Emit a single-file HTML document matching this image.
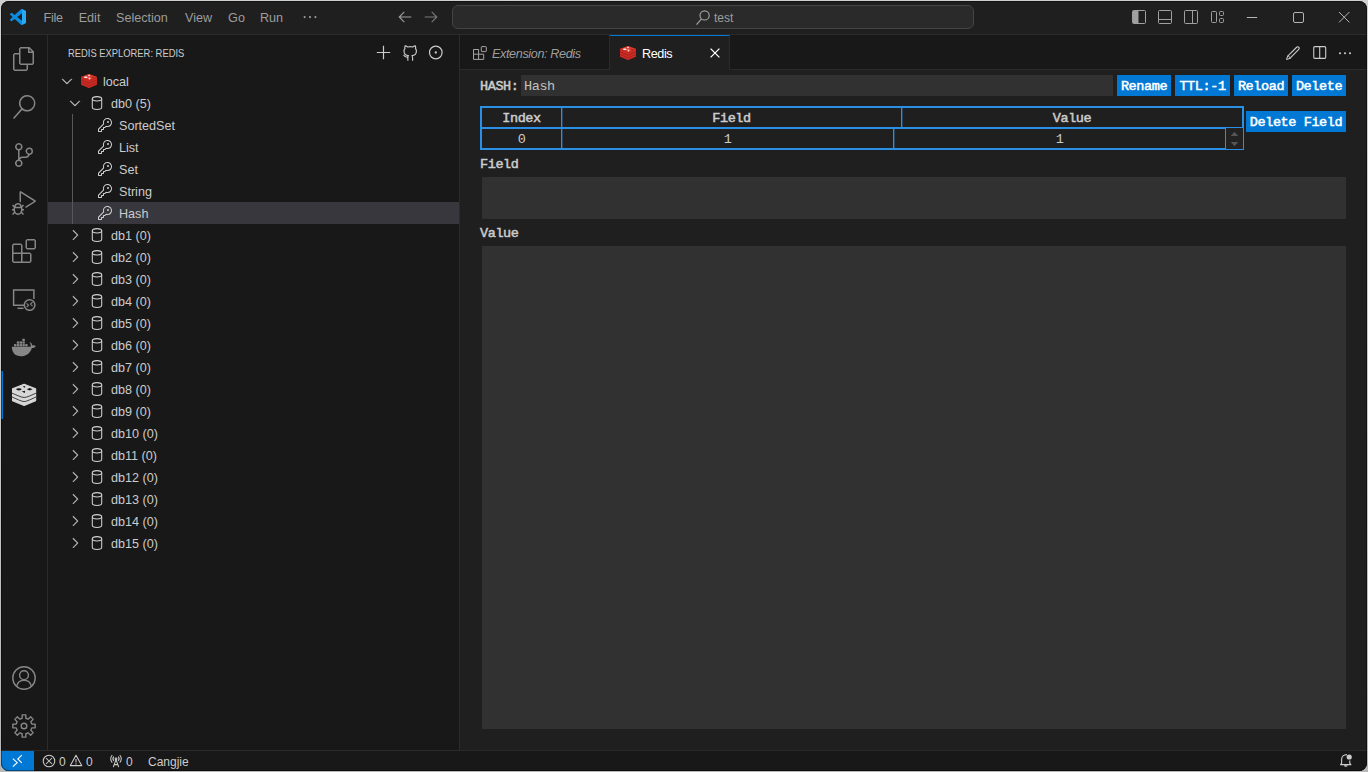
<!DOCTYPE html>
<html>
<head>
<meta charset="utf-8">
<title>Redis - test - Visual Studio Code</title>
<style>
*{box-sizing:border-box;margin:0;padding:0}
html,body{width:1368px;height:772px;overflow:hidden;background:linear-gradient(#d0d0d0,#c9c9c9 50%,#b8b8b8);font-family:"Liberation Sans",sans-serif;}
#win{position:absolute;left:1px;top:1px;width:1366px;height:770px;background:#1f1f1f;border-radius:8px;overflow:hidden;color:#cccccc;font-size:13px;}
.abs{position:absolute}
#win::after{content:"";position:absolute;left:0;top:0;right:0;bottom:0;border:1px solid rgba(0,0,0,.4);border-radius:8px;z-index:20}
/* title bar */
#title{position:absolute;left:0;top:0;width:1366px;height:34px;background:#1f1f1f;border-bottom:1px solid #2b2b2b;color:#9d9d9d}
#title .menu{position:absolute;top:1px;height:33px;line-height:33px;font-size:12.6px;white-space:nowrap}
#cc{position:absolute;left:451px;top:4px;width:522px;height:24px;border:1px solid #444444;border-radius:6px;background:#2a2a2a}
#cc span{position:absolute;left:261px;top:1px;line-height:22px;font-size:12px;color:#9d9d9d}
/* activity bar */
#act{position:absolute;left:0;top:34px;width:47px;height:715px;background:#181818;border-right:1px solid #2b2b2b}
#act svg{position:absolute}
/* sidebar */
#side{position:absolute;left:47px;top:34px;width:412px;height:715px;background:#181818;border-right:1px solid #2b2b2b}
#side .hdr{position:absolute;left:20px;top:0;height:35px;line-height:36px;font-size:11px;color:#cccccc;white-space:nowrap;transform:scaleX(0.853);transform-origin:0 0}
.row{position:absolute;left:0;width:411px;height:22px;line-height:22px;font-size:12.6px;color:#cccccc;white-space:nowrap}
.row span{position:absolute;top:1px}
.row svg{position:absolute}
.row.sel{background:#37373d}
/* editor */
#tabs{position:absolute;left:459px;top:34px;width:907px;height:35px;background:#181818;border-bottom:1px solid #2b2b2b}
.tab{position:absolute;top:0;height:35px;border-right:1px solid #2b2b2b;font-size:13px;line-height:35px;white-space:nowrap}
.tab.active{background:#1f1f1f;border-top:1px solid #0078d4;color:#fff;height:36px;line-height:33px}
#ed{position:absolute;left:459px;top:69px;width:907px;height:680px;background:#1f1f1f;font-family:"Liberation Mono",monospace;font-size:13.5px;letter-spacing:-0.4px;color:#cccccc}
.btn{position:absolute;padding-top:1px;background:#0078d4;color:#fff;font-family:"Liberation Mono",monospace;font-size:13.5px;font-weight:normal;-webkit-text-stroke:0.5px #fff;text-align:center;white-space:nowrap}
.lbl{position:absolute;font-weight:normal;-webkit-text-stroke:0.5px #cccccc;font-size:13.5px;color:#cccccc;white-space:nowrap}
.inp{position:absolute;background:#313131}
.cell{position:absolute;height:19px;line-height:21px;text-align:center;color:#cccccc}
/* status */
#status{position:absolute;left:0;top:749px;width:1366px;height:21px;background:#181818;border-top:1px solid #2b2b2b;font-size:12px;color:#cccccc}
#status span{position:absolute;top:1px;line-height:21px;white-space:nowrap}
#remote{position:absolute;left:0;top:0;width:33px;height:21px;background:#0078d4}
</style>
</head>
<body>
<div id="win">
  <div id="title">
    <svg class="abs" style="left:9px;top:8px" width="16" height="16" viewBox="0 0 100 100"><path fill="#0c8ce0" d="M96.46 10.8L75.86.88a6.23 6.23 0 0 0-7.11 1.2L29.35 38.04 12.2 25.02a4.16 4.16 0 0 0-5.32.23l-5.5 5a4.17 4.17 0 0 0 0 6.16L16.25 50 1.37 63.59a4.17 4.17 0 0 0 0 6.16l5.5 5a4.16 4.16 0 0 0 5.33.23l17.15-13.02 39.4 35.96a6.23 6.23 0 0 0 7.1 1.2l20.62-9.92A6.25 6.25 0 0 0 100 83.58V16.42a6.25 6.25 0 0 0-3.54-5.62zM75.02 72.7L45.1 50l29.9-22.7v45.4z"/><path fill="#27a9f5" d="M75.02 0.6 L96.46 10.8 A6.25 6.25 0 0 1 100 16.42 V83.58 A6.25 6.25 0 0 1 96.46 89.2 L75.02 99.4 Z"/></svg>
    <div class="menu" style="left:42.500px;letter-spacing:-0.3px">File</div>
    <div class="menu" style="left:77.700px">Edit</div>
    <div class="menu" style="left:115px">Selection</div>
    <div class="menu" style="left:184px">View</div>
    <div class="menu" style="left:227px;letter-spacing:0.3px">Go</div>
    <div class="menu" style="left:259px">Run</div>
    <svg class="abs" style="left:301px;top:8px" width="16" height="16" viewBox="0 0 16 16" fill="#9d9d9d"><circle cx="2.6" cy="8.1" r="1.05"/><circle cx="8" cy="8.1" r="1.05"/><circle cx="13.4" cy="8.1" r="1.05"/></svg>
    <svg class="abs" style="left:395.800px;top:8px" width="16" height="16" viewBox="0 0 16 16" fill="none" stroke="#9d9d9d" stroke-width="1.1"><path d="M14.3 8H2.2M7.3 2.8L2.2 8l5.1 5.2"/></svg>
    <svg class="abs" style="left:422px;top:8px" width="16" height="16" viewBox="0 0 16 16" fill="none" stroke="#7a7a7a" stroke-width="1.1"><path d="M1.7 8h12.1M8.7 2.8L13.8 8l-5.1 5.2"/></svg>
    <!-- layout icons -->
    <svg class="abs" style="left:1130px;top:8px" width="16" height="16" viewBox="0 0 16 16"><rect x="1.5" y="1.5" width="13" height="13" rx="1" fill="none" stroke="#a0a0a0" stroke-width="1"/><rect x="2" y="2" width="5.5" height="12" fill="#a0a0a0"/></svg>
    <svg class="abs" style="left:1156px;top:8px" width="16" height="16" viewBox="0 0 16 16" fill="none" stroke="#a0a0a0" stroke-width="1"><rect x="1.5" y="1.5" width="13" height="13" rx="1"/><path d="M1.5 10.5h13"/></svg>
    <svg class="abs" style="left:1182px;top:8px" width="16" height="16" viewBox="0 0 16 16" fill="none" stroke="#a0a0a0" stroke-width="1"><rect x="1.5" y="1.5" width="13" height="13" rx="1"/><path d="M9.5 1.5v13"/></svg>
    <svg class="abs" style="left:1209px;top:8px" width="16" height="16" viewBox="0 0 16 16" fill="none" stroke="#a0a0a0" stroke-width="1"><rect x="1.5" y="2.5" width="5" height="11" rx="1"/><rect x="9.5" y="2.5" width="4" height="4" rx="1"/><rect x="9.5" y="9.5" width="4" height="4" rx="1"/></svg>
    <!-- window controls -->
    <svg class="abs" style="left:1245px;top:11px" width="12" height="12" viewBox="0 0 12 12" fill="none" stroke="#b4b4b4" stroke-width="1"><path d="M0.8 5.5h10.4"/></svg>
    <svg class="abs" style="left:1292px;top:11px" width="12" height="12" viewBox="0 0 12 12" fill="none" stroke="#b4b4b4" stroke-width="1"><rect x="0.5" y="0.5" width="10" height="10" rx="1.5"/></svg>
    <svg class="abs" style="left:1337px;top:10px" width="12" height="12" viewBox="0 0 12 12" fill="none" stroke="#b4b4b4" stroke-width="1"><path d="M1 1l10.4 10.4M11.4 1L1 11.4"/></svg>
    <svg class="abs" style="left:693.600px;top:7.500px;z-index:2" width="16" height="17" viewBox="0 0 16 17" fill="none" stroke="#a0a0a0" stroke-width="1.2"><circle cx="9.6" cy="6.4" r="4.600"/><path d="M6.500 9.800L1.500 15.600"/></svg>
    <div id="cc"><span>test</span></div>
  </div>
  <div id="act">
    <svg style="left:11px;top:12px" width="24" height="24" viewBox="0 0 24 24"><path fill="#868686" d="M17.5 0h-9L7 1.5V6H2.5L1 7.5v15.07L2.5 24h12.07L16 22.57V18h4.7l1.3-1.43V4.5L17.5 0zm0 2.12l2.38 2.38H17.5V2.12zm-3 20.38h-12v-15H7v9.07L8.5 18h6v4.5zm6-6h-12v-15H16V6h4.5v10.5z"/></svg>
    <svg style="left:11px;top:60px" width="24" height="24" viewBox="0 0 24 24"><path fill="#868686" d="M15.25 0a8.25 8.25 0 0 0-6.18 13.72L1 22.88l1.12 1.12 8.05-9.12A8.251 8.251 0 1 0 15.25.01V0zm0 15a6.75 6.75 0 1 1 0-13.5 6.75 6.75 0 0 1 0 13.5z"/></svg>
    <svg style="left:11px;top:108px" width="24" height="24" viewBox="0 0 24 24"><path fill="#868686" d="M21.007 8.222A3.738 3.738 0 0 0 15.045 5.2a3.737 3.737 0 0 0 1.156 6.583 2.988 2.988 0 0 1-2.668 1.67h-2.99a4.456 4.456 0 0 0-2.989 1.165V7.4a3.737 3.737 0 1 0-1.494 0v9.117a3.776 3.776 0 1 0 1.816.099 2.99 2.99 0 0 1 2.668-1.667h2.99a4.484 4.484 0 0 0 4.223-3.039 3.736 3.736 0 0 0 3.25-3.687zM4.565 3.738a2.242 2.242 0 1 1 4.484 0 2.242 2.242 0 0 1-4.484 0zm4.484 16.441a2.242 2.242 0 1 1-4.484 0 2.242 2.242 0 0 1 4.484 0zm8.221-9.715a2.242 2.242 0 1 1 0-4.485 2.242 2.242 0 0 1 0 4.485z"/></svg>
    <svg style="left:11px;top:156px" width="24" height="24" viewBox="0 0 24 24"><path fill="#868686" d="M10.94 13.5l-1.32 1.32a3.73 3.73 0 0 0-7.24 0L1.06 13.5 0 14.56l1.72 1.72-.22.22V18H0v1.5h1.5v.08c.077.489.214.966.41 1.42L0 22.94 1.06 24l1.65-1.65A4.308 4.308 0 0 0 6 24a4.31 4.31 0 0 0 3.29-1.65L10.94 24 12 22.94 10.09 21c.198-.464.336-.951.41-1.45v-.1H12V18h-1.5v-1.5l-.22-.22L12 14.56l-1.06-1.06zM6 13.5a2.25 2.25 0 0 1 2.25 2.25h-4.5A2.25 2.25 0 0 1 6 13.5zm3 6a3.33 3.33 0 0 1-3 3 3.33 3.33 0 0 1-3-3v-2.25h6v2.25zm14.76-9.9v1.26L13.5 17.37V15.6l8.5-5.37L9 2v9.46a5.07 5.07 0 0 0-1.5-.72V.63L8.64 0l15.12 9.6z"/></svg>
    <svg style="left:11px;top:204px" width="24" height="24" viewBox="0 0 24 24"><path fill="#868686" d="M13.5 1.5L15 0h7.5L24 1.5V9l-1.5 1.5H15L13.5 9V1.5zm1.5 0V9h7.5V1.5H15zM0 15V6l1.5-1.5H9L10.5 6v7.5H18l1.5 1.5v7.5L18 24H1.5L0 22.5V15zm9-1.5V6H1.5v7.5H9zM9 15H1.5v7.5H9V15zm1.5 7.5H18V15h-7.5v7.5z"/></svg>
    <svg style="left:11px;top:252px" width="24" height="24" viewBox="0 0 24 24"><g fill="none" stroke="#868686" stroke-width="1.5"><path d="M13 18.2H1.6V3.1h20.3V12"/><path d="M5.5 21.3h6"/><circle cx="17.6" cy="18" r="5.3"/><path stroke-width="1.1" d="M14.6 16.3l2 1.9-2 1.9M20.5 15.2l-2 1.9 2 1.9"/></g></svg>
    <svg style="left:11px;top:300px;overflow:visible" width="24" height="24" viewBox="0 0 24 24"><g fill="#868686"><path d="M-0.200 11.800H18.600c.4-1.600.1-2.900-.9-4l.8-.6c1.100.9 1.600 2 1.700 3.200 1.300-.4 2.600-.2 3.600.5-.8 1.500-2.200 2.100-3.900 2C18.100 18.300 14.300 21.200 8.800 21.200 3.600 21.200.1 18.300-.2 11.800z"/><rect x="2.0" y="9.100" width="2.400" height="2.300"/><rect x="4.8" y="9.100" width="2.400" height="2.300"/><rect x="7.6" y="9.100" width="2.400" height="2.300"/><rect x="10.4" y="9.100" width="2.400" height="2.300"/><rect x="13.2" y="9.100" width="2.400" height="2.300"/><rect x="4.8" y="6.400" width="2.400" height="2.300"/><rect x="7.6" y="6.400" width="2.400" height="2.300"/><rect x="10.4" y="6.400" width="2.400" height="2.300"/><rect x="10.400" y="3.700" width="2.400" height="2.300"/></g></svg>
    <svg style="left:11px;top:348px" width="25" height="24" viewBox="0 0 25 24"><path fill="#d7d7d7" stroke="#d7d7d7" stroke-width="1.2" stroke-linejoin="round" d="M12.150 1.300L23.600 5.900V17.600L12.150 22.500 0.500 17.600V5.900z"/><path fill="none" stroke="#181818" stroke-width=".8" d="M-0.100 10.100C4 11.800 9.500 14.500 12.150 14.500S20.200 11.800 24.200 10.100M-0.100 13.900C4 15.600 9.500 18.600 12.150 18.600S20.200 15.600 24.200 13.900"/><g fill="#181818"><ellipse cx="6.900" cy="6.300" rx="2.700" ry="1.150"/><path d="M14.700 6.300l3-1.300 2.900 1.300-2.900 1.300z"/><path d="M10.900 3.300l2.400-.3-.9 1.900z"/><path d="M9.600 8.500l3.600-.8-.4 2.200z"/></g></svg>
    <div class="abs" style="left:0;top:336px;width:2px;height:48px;background:#0078d4"></div>
    <svg style="left:11px;top:631px" width="24" height="24" viewBox="0 0 24 24" fill="none" stroke="#868686" stroke-width="1.4"><circle cx="12" cy="12" r="11.2"/><circle cx="12" cy="9.2" r="4.400"/><path d="M4.700 20.200c.7-3.600 3.700-6 7.300-6s6.600 2.400 7.300 6"/></svg>
    <svg style="left:11px;top:679px" width="24" height="24" viewBox="0 0 24 24" fill="none" stroke="#868686" stroke-width="1.4" stroke-linejoin="round"><path d="M10.10 4.23 L10.20 0.84 L13.80 0.84 L13.90 4.23 L16.15 5.16 L18.62 2.84 L21.16 5.38 L18.84 7.85 L19.77 10.10 L23.16 10.20 L23.16 13.80 L19.77 13.90 L18.84 16.15 L21.16 18.62 L18.62 21.16 L16.15 18.84 L13.90 19.77 L13.80 23.16 L10.20 23.16 L10.10 19.77 L7.85 18.84 L5.38 21.16 L2.84 18.62 L5.16 16.15 L4.23 13.90 L0.84 13.80 L0.84 10.20 L4.23 10.10 L5.16 7.85 L2.84 5.38 L5.38 2.84 L7.85 5.16Z"/><circle cx="12" cy="12" r="2.800"/></svg>
  </div>
  <div id="side">
    <div class="hdr">REDIS EXPLORER: REDIS</div>
    <svg class="abs" style="left:328.200px;top:10px" width="16" height="16" viewBox="0 0 16 16"><path fill="#cccccc" d="M14.200 6.900v1.200H8.100v6.100H6.900V8.100H0.800V6.900h6.100V0.800h1.200v6.100h6.100z"/></svg>
    <svg class="abs" style="left:354px;top:10px" width="16" height="16" viewBox="0 0 16 16" fill="none" stroke="#c5c5c5" stroke-width="1.1" stroke-linejoin="round"><path transform="translate(8 8) scale(1.07) translate(-8 -8)" d="M5.600 12.800V11.600c-2.600.7-2.600-1.400-3.700-1.600M10.400 15.300v-3.100c0-.8-.2-1.300-.6-1.700 2.100-.2 4.200-1 4.200-4.400 0-.9-.3-1.700-.9-2.300.3-.8.3-1.600-.1-2.400 0 0-.8-.2-2.500 1a8.700 8.700 0 0 0-4.600 0C4.200 1.200 3.400 1.400 3.400 1.400c-.4.800-.4 1.600-.1 2.400-.6.600-.9 1.400-.9 2.300 0 3.400 2.100 4.200 4.200 4.400-.4.400-.6.900-.6 1.700v3.100"/></svg>
    <svg class="abs" style="left:379.500px;top:10px" width="16" height="16" viewBox="0 0 16 16"><circle cx="7.800" cy="7.500" r="6.300" fill="none" stroke="#cccccc" stroke-width="1.2"/><circle cx="7.800" cy="7.500" r="1.150" fill="#cccccc"/></svg>
    <div class="row" style="top:35px"><svg style="left:11px;top:3px" width="16" height="16" viewBox="0 0 16 16"><path fill="#cccccc" stroke="#cccccc" stroke-width=".25" d="M7.976 10.072l4.357-4.357.62.618L8.284 11h-.618L3 6.333l.619-.618 4.357 4.357z"/></svg><svg style="left:33px;top:4px" width="16" height="14" viewBox="0 0 16 14"><path fill="#c92c25" d="M0 3.100L8 0l8 3.100v7.700L8 14.100 0 10.800z"/><path fill="#dc382c" d="M0 3.100L8 0l8 3.100-8 3.300z"/><path fill="none" stroke="#a8201a" stroke-width=".8" d="M0 5.900l8 3.300 8-3.300M0 8.500l8 3.300 8-3.300"/><path fill="none" stroke="#b5241d" stroke-width=".5" d="M0 3.300l8 3.300 8-3.300"/><path fill="#fff" d="M6.900 1.100l1.500-.4.900 1.300-1.700.2z" opacity=".85"/><ellipse cx="4.800" cy="3.200" rx="1.900" ry=".7" fill="#fff"/><path fill="#fff" opacity=".8" d="M7.200 3.700l2.200-.2-.1 1.800-1.200.1z"/><path fill="#8d160f" d="M11.200 2.700l2.300.8-1.800.4z"/></svg><span style="left:55px">local</span></div>
    <div class="row" style="top:57px"><svg style="left:19px;top:3px" width="16" height="16" viewBox="0 0 16 16"><path fill="#cccccc" stroke="#cccccc" stroke-width=".25" d="M7.976 10.072l4.357-4.357.62.618L8.284 11h-.618L3 6.333l.619-.618 4.357 4.357z"/></svg><svg style="left:41px;top:3px" width="16" height="16" viewBox="0 0 16 16" fill="none" stroke="#d0d0d0" stroke-width="1.05"><ellipse cx="8" cy="3.800" rx="4.700" ry="2.200"/><path d="M3.300 3.800v8.400c0 1.200 2.100 2.200 4.700 2.200s4.700-1 4.700-2.200V3.800"/></svg><span style="left:63px">db0 (5)</span></div>
    <div class="row" style="top:79px"><svg style="left:49px;top:3px" width="16" height="16" viewBox="0 0 16 16"><path fill="#d0d0d0" d="M11.351 1.091a4.528 4.528 0 0 1 3.44 3.16c.215.724.247 1.49.093 2.23a4.583 4.583 0 0 1-4.437 3.6c-.438 0-.874-.063-1.293-.19l-.8.938-.379.175H7v1.5l-.5.5H5v1.5l-.5.5h-3l-.5-.5v-2.307l.146-.353L6.12 6.87a4.464 4.464 0 0 1-.2-1.405 4.528 4.528 0 0 1 5.431-4.375zm1.318 7.2a3.568 3.568 0 0 0 1.239-2.005l.004.005A3.543 3.543 0 0 0 9.72 2.08a3.576 3.576 0 0 0-2.800 3.400c-.01.456.07.908.239 1.330l-.11.543L2 12.404v1.600h2v-1.500l.5-.5H6v-1.500l.5-.5h1.245l.876-1.016.561-.14a3.470 3.470 0 0 0 1.269.238 3.568 3.568 0 0 0 2.218-.795zm-.838-2.732a1 1 0 1 0-1.662-1.110 1 1 0 0 0 1.662 1.110z"/></svg><span style="left:71px">SortedSet</span></div>
    <div class="row" style="top:101px"><svg style="left:49px;top:3px" width="16" height="16" viewBox="0 0 16 16"><path fill="#d0d0d0" d="M11.351 1.091a4.528 4.528 0 0 1 3.44 3.16c.215.724.247 1.49.093 2.23a4.583 4.583 0 0 1-4.437 3.6c-.438 0-.874-.063-1.293-.19l-.8.938-.379.175H7v1.5l-.5.5H5v1.5l-.5.5h-3l-.5-.5v-2.307l.146-.353L6.12 6.87a4.464 4.464 0 0 1-.2-1.405 4.528 4.528 0 0 1 5.431-4.375zm1.318 7.2a3.568 3.568 0 0 0 1.239-2.005l.004.005A3.543 3.543 0 0 0 9.72 2.08a3.576 3.576 0 0 0-2.800 3.400c-.01.456.07.908.239 1.330l-.11.543L2 12.404v1.600h2v-1.500l.5-.5H6v-1.500l.5-.5h1.245l.876-1.016.561-.14a3.470 3.470 0 0 0 1.269.238 3.568 3.568 0 0 0 2.218-.795zm-.838-2.732a1 1 0 1 0-1.662-1.110 1 1 0 0 0 1.662 1.110z"/></svg><span style="left:71px">List</span></div>
    <div class="row" style="top:123px"><svg style="left:49px;top:3px" width="16" height="16" viewBox="0 0 16 16"><path fill="#d0d0d0" d="M11.351 1.091a4.528 4.528 0 0 1 3.44 3.16c.215.724.247 1.49.093 2.23a4.583 4.583 0 0 1-4.437 3.6c-.438 0-.874-.063-1.293-.19l-.8.938-.379.175H7v1.5l-.5.5H5v1.5l-.5.5h-3l-.5-.5v-2.307l.146-.353L6.12 6.87a4.464 4.464 0 0 1-.2-1.405 4.528 4.528 0 0 1 5.431-4.375zm1.318 7.2a3.568 3.568 0 0 0 1.239-2.005l.004.005A3.543 3.543 0 0 0 9.72 2.08a3.576 3.576 0 0 0-2.800 3.400c-.01.456.07.908.239 1.330l-.11.543L2 12.404v1.600h2v-1.500l.5-.5H6v-1.500l.5-.5h1.245l.876-1.016.561-.14a3.470 3.470 0 0 0 1.269.238 3.568 3.568 0 0 0 2.218-.795zm-.838-2.732a1 1 0 1 0-1.662-1.110 1 1 0 0 0 1.662 1.110z"/></svg><span style="left:71px">Set</span></div>
    <div class="row" style="top:145px"><svg style="left:49px;top:3px" width="16" height="16" viewBox="0 0 16 16"><path fill="#d0d0d0" d="M11.351 1.091a4.528 4.528 0 0 1 3.44 3.16c.215.724.247 1.49.093 2.23a4.583 4.583 0 0 1-4.437 3.6c-.438 0-.874-.063-1.293-.19l-.8.938-.379.175H7v1.5l-.5.5H5v1.5l-.5.5h-3l-.5-.5v-2.307l.146-.353L6.12 6.87a4.464 4.464 0 0 1-.2-1.405 4.528 4.528 0 0 1 5.431-4.375zm1.318 7.2a3.568 3.568 0 0 0 1.239-2.005l.004.005A3.543 3.543 0 0 0 9.72 2.08a3.576 3.576 0 0 0-2.800 3.400c-.01.456.07.908.239 1.330l-.11.543L2 12.404v1.600h2v-1.500l.5-.5H6v-1.500l.5-.5h1.245l.876-1.016.561-.14a3.470 3.470 0 0 0 1.269.238 3.568 3.568 0 0 0 2.218-.795zm-.838-2.732a1 1 0 1 0-1.662-1.110 1 1 0 0 0 1.662 1.110z"/></svg><span style="left:71px">String</span></div>
    <div class="row sel" style="top:167px"><svg style="left:49px;top:3px" width="16" height="16" viewBox="0 0 16 16"><path fill="#d0d0d0" d="M11.351 1.091a4.528 4.528 0 0 1 3.44 3.16c.215.724.247 1.49.093 2.23a4.583 4.583 0 0 1-4.437 3.6c-.438 0-.874-.063-1.293-.19l-.8.938-.379.175H7v1.5l-.5.5H5v1.5l-.5.5h-3l-.5-.5v-2.307l.146-.353L6.12 6.87a4.464 4.464 0 0 1-.2-1.405 4.528 4.528 0 0 1 5.431-4.375zm1.318 7.2a3.568 3.568 0 0 0 1.239-2.005l.004.005A3.543 3.543 0 0 0 9.72 2.08a3.576 3.576 0 0 0-2.800 3.400c-.01.456.07.908.239 1.330l-.11.543L2 12.404v1.600h2v-1.500l.5-.5H6v-1.500l.5-.5h1.245l.876-1.016.561-.14a3.470 3.470 0 0 0 1.269.238 3.568 3.568 0 0 0 2.218-.795zm-.838-2.732a1 1 0 1 0-1.662-1.110 1 1 0 0 0 1.662 1.110z"/></svg><span style="left:71px">Hash</span></div>
    <div class="row" style="top:189px"><svg style="left:19px;top:3px" width="16" height="16" viewBox="0 0 16 16"><path fill="#cccccc" stroke="#cccccc" stroke-width=".25" d="M10.072 8.024L5.715 3.667l.618-.62L11 7.716v.618L6.333 13l-.618-.619 4.357-4.357z"/></svg><svg style="left:41px;top:3px" width="16" height="16" viewBox="0 0 16 16" fill="none" stroke="#d0d0d0" stroke-width="1.05"><ellipse cx="8" cy="3.800" rx="4.700" ry="2.200"/><path d="M3.300 3.800v8.400c0 1.200 2.100 2.200 4.700 2.200s4.700-1 4.700-2.200V3.800"/></svg><span style="left:63px">db1 (0)</span></div>
    <div class="row" style="top:211px"><svg style="left:19px;top:3px" width="16" height="16" viewBox="0 0 16 16"><path fill="#cccccc" stroke="#cccccc" stroke-width=".25" d="M10.072 8.024L5.715 3.667l.618-.62L11 7.716v.618L6.333 13l-.618-.619 4.357-4.357z"/></svg><svg style="left:41px;top:3px" width="16" height="16" viewBox="0 0 16 16" fill="none" stroke="#d0d0d0" stroke-width="1.05"><ellipse cx="8" cy="3.800" rx="4.700" ry="2.200"/><path d="M3.300 3.800v8.400c0 1.200 2.100 2.200 4.700 2.200s4.700-1 4.700-2.200V3.800"/></svg><span style="left:63px">db2 (0)</span></div>
    <div class="row" style="top:233px"><svg style="left:19px;top:3px" width="16" height="16" viewBox="0 0 16 16"><path fill="#cccccc" stroke="#cccccc" stroke-width=".25" d="M10.072 8.024L5.715 3.667l.618-.62L11 7.716v.618L6.333 13l-.618-.619 4.357-4.357z"/></svg><svg style="left:41px;top:3px" width="16" height="16" viewBox="0 0 16 16" fill="none" stroke="#d0d0d0" stroke-width="1.05"><ellipse cx="8" cy="3.800" rx="4.700" ry="2.200"/><path d="M3.300 3.800v8.400c0 1.200 2.100 2.200 4.700 2.200s4.700-1 4.700-2.200V3.800"/></svg><span style="left:63px">db3 (0)</span></div>
    <div class="row" style="top:255px"><svg style="left:19px;top:3px" width="16" height="16" viewBox="0 0 16 16"><path fill="#cccccc" stroke="#cccccc" stroke-width=".25" d="M10.072 8.024L5.715 3.667l.618-.62L11 7.716v.618L6.333 13l-.618-.619 4.357-4.357z"/></svg><svg style="left:41px;top:3px" width="16" height="16" viewBox="0 0 16 16" fill="none" stroke="#d0d0d0" stroke-width="1.05"><ellipse cx="8" cy="3.800" rx="4.700" ry="2.200"/><path d="M3.300 3.800v8.400c0 1.200 2.100 2.200 4.700 2.200s4.700-1 4.700-2.200V3.800"/></svg><span style="left:63px">db4 (0)</span></div>
    <div class="row" style="top:277px"><svg style="left:19px;top:3px" width="16" height="16" viewBox="0 0 16 16"><path fill="#cccccc" stroke="#cccccc" stroke-width=".25" d="M10.072 8.024L5.715 3.667l.618-.62L11 7.716v.618L6.333 13l-.618-.619 4.357-4.357z"/></svg><svg style="left:41px;top:3px" width="16" height="16" viewBox="0 0 16 16" fill="none" stroke="#d0d0d0" stroke-width="1.05"><ellipse cx="8" cy="3.800" rx="4.700" ry="2.200"/><path d="M3.300 3.800v8.400c0 1.200 2.100 2.200 4.700 2.200s4.700-1 4.700-2.200V3.800"/></svg><span style="left:63px">db5 (0)</span></div>
    <div class="row" style="top:299px"><svg style="left:19px;top:3px" width="16" height="16" viewBox="0 0 16 16"><path fill="#cccccc" stroke="#cccccc" stroke-width=".25" d="M10.072 8.024L5.715 3.667l.618-.62L11 7.716v.618L6.333 13l-.618-.619 4.357-4.357z"/></svg><svg style="left:41px;top:3px" width="16" height="16" viewBox="0 0 16 16" fill="none" stroke="#d0d0d0" stroke-width="1.05"><ellipse cx="8" cy="3.800" rx="4.700" ry="2.200"/><path d="M3.300 3.800v8.400c0 1.200 2.100 2.200 4.700 2.200s4.700-1 4.700-2.200V3.800"/></svg><span style="left:63px">db6 (0)</span></div>
    <div class="row" style="top:321px"><svg style="left:19px;top:3px" width="16" height="16" viewBox="0 0 16 16"><path fill="#cccccc" stroke="#cccccc" stroke-width=".25" d="M10.072 8.024L5.715 3.667l.618-.62L11 7.716v.618L6.333 13l-.618-.619 4.357-4.357z"/></svg><svg style="left:41px;top:3px" width="16" height="16" viewBox="0 0 16 16" fill="none" stroke="#d0d0d0" stroke-width="1.05"><ellipse cx="8" cy="3.800" rx="4.700" ry="2.200"/><path d="M3.300 3.800v8.400c0 1.200 2.100 2.200 4.700 2.200s4.700-1 4.700-2.200V3.800"/></svg><span style="left:63px">db7 (0)</span></div>
    <div class="row" style="top:343px"><svg style="left:19px;top:3px" width="16" height="16" viewBox="0 0 16 16"><path fill="#cccccc" stroke="#cccccc" stroke-width=".25" d="M10.072 8.024L5.715 3.667l.618-.62L11 7.716v.618L6.333 13l-.618-.619 4.357-4.357z"/></svg><svg style="left:41px;top:3px" width="16" height="16" viewBox="0 0 16 16" fill="none" stroke="#d0d0d0" stroke-width="1.05"><ellipse cx="8" cy="3.800" rx="4.700" ry="2.200"/><path d="M3.300 3.800v8.400c0 1.200 2.100 2.200 4.700 2.200s4.700-1 4.700-2.200V3.800"/></svg><span style="left:63px">db8 (0)</span></div>
    <div class="row" style="top:365px"><svg style="left:19px;top:3px" width="16" height="16" viewBox="0 0 16 16"><path fill="#cccccc" stroke="#cccccc" stroke-width=".25" d="M10.072 8.024L5.715 3.667l.618-.62L11 7.716v.618L6.333 13l-.618-.619 4.357-4.357z"/></svg><svg style="left:41px;top:3px" width="16" height="16" viewBox="0 0 16 16" fill="none" stroke="#d0d0d0" stroke-width="1.05"><ellipse cx="8" cy="3.800" rx="4.700" ry="2.200"/><path d="M3.300 3.800v8.400c0 1.200 2.100 2.200 4.700 2.200s4.700-1 4.700-2.200V3.800"/></svg><span style="left:63px">db9 (0)</span></div>
    <div class="row" style="top:387px"><svg style="left:19px;top:3px" width="16" height="16" viewBox="0 0 16 16"><path fill="#cccccc" stroke="#cccccc" stroke-width=".25" d="M10.072 8.024L5.715 3.667l.618-.62L11 7.716v.618L6.333 13l-.618-.619 4.357-4.357z"/></svg><svg style="left:41px;top:3px" width="16" height="16" viewBox="0 0 16 16" fill="none" stroke="#d0d0d0" stroke-width="1.05"><ellipse cx="8" cy="3.800" rx="4.700" ry="2.200"/><path d="M3.300 3.800v8.400c0 1.200 2.100 2.200 4.700 2.200s4.700-1 4.700-2.200V3.800"/></svg><span style="left:63px">db10 (0)</span></div>
    <div class="row" style="top:409px"><svg style="left:19px;top:3px" width="16" height="16" viewBox="0 0 16 16"><path fill="#cccccc" stroke="#cccccc" stroke-width=".25" d="M10.072 8.024L5.715 3.667l.618-.62L11 7.716v.618L6.333 13l-.618-.619 4.357-4.357z"/></svg><svg style="left:41px;top:3px" width="16" height="16" viewBox="0 0 16 16" fill="none" stroke="#d0d0d0" stroke-width="1.05"><ellipse cx="8" cy="3.800" rx="4.700" ry="2.200"/><path d="M3.300 3.800v8.400c0 1.200 2.100 2.200 4.700 2.200s4.700-1 4.700-2.200V3.800"/></svg><span style="left:63px">db11 (0)</span></div>
    <div class="row" style="top:431px"><svg style="left:19px;top:3px" width="16" height="16" viewBox="0 0 16 16"><path fill="#cccccc" stroke="#cccccc" stroke-width=".25" d="M10.072 8.024L5.715 3.667l.618-.62L11 7.716v.618L6.333 13l-.618-.619 4.357-4.357z"/></svg><svg style="left:41px;top:3px" width="16" height="16" viewBox="0 0 16 16" fill="none" stroke="#d0d0d0" stroke-width="1.05"><ellipse cx="8" cy="3.800" rx="4.700" ry="2.200"/><path d="M3.300 3.800v8.400c0 1.200 2.100 2.200 4.700 2.200s4.700-1 4.700-2.200V3.800"/></svg><span style="left:63px">db12 (0)</span></div>
    <div class="row" style="top:453px"><svg style="left:19px;top:3px" width="16" height="16" viewBox="0 0 16 16"><path fill="#cccccc" stroke="#cccccc" stroke-width=".25" d="M10.072 8.024L5.715 3.667l.618-.62L11 7.716v.618L6.333 13l-.618-.619 4.357-4.357z"/></svg><svg style="left:41px;top:3px" width="16" height="16" viewBox="0 0 16 16" fill="none" stroke="#d0d0d0" stroke-width="1.05"><ellipse cx="8" cy="3.800" rx="4.700" ry="2.200"/><path d="M3.300 3.800v8.400c0 1.200 2.100 2.200 4.700 2.200s4.700-1 4.700-2.200V3.800"/></svg><span style="left:63px">db13 (0)</span></div>
    <div class="row" style="top:475px"><svg style="left:19px;top:3px" width="16" height="16" viewBox="0 0 16 16"><path fill="#cccccc" stroke="#cccccc" stroke-width=".25" d="M10.072 8.024L5.715 3.667l.618-.62L11 7.716v.618L6.333 13l-.618-.619 4.357-4.357z"/></svg><svg style="left:41px;top:3px" width="16" height="16" viewBox="0 0 16 16" fill="none" stroke="#d0d0d0" stroke-width="1.05"><ellipse cx="8" cy="3.800" rx="4.700" ry="2.200"/><path d="M3.300 3.800v8.400c0 1.200 2.100 2.200 4.700 2.200s4.700-1 4.700-2.200V3.800"/></svg><span style="left:63px">db14 (0)</span></div>
    <div class="row" style="top:497px"><svg style="left:19px;top:3px" width="16" height="16" viewBox="0 0 16 16"><path fill="#cccccc" stroke="#cccccc" stroke-width=".25" d="M10.072 8.024L5.715 3.667l.618-.62L11 7.716v.618L6.333 13l-.618-.619 4.357-4.357z"/></svg><svg style="left:41px;top:3px" width="16" height="16" viewBox="0 0 16 16" fill="none" stroke="#d0d0d0" stroke-width="1.05"><ellipse cx="8" cy="3.800" rx="4.700" ry="2.200"/><path d="M3.300 3.800v8.400c0 1.200 2.100 2.200 4.700 2.200s4.700-1 4.700-2.200V3.800"/></svg><span style="left:63px">db15 (0)</span></div>
    <div class="abs" style="left:24px;top:79px;width:1px;height:110px;background:#585858"></div>
  </div>
  <div id="tabs">
    <div class="tab" style="left:0;width:150px;color:#9d9d9d;font-style:italic"><svg class="abs" style="left:13px;top:11px" width="14" height="14" viewBox="0 0 14 14" fill="none" stroke="#a6a6a6" stroke-width="1"><path d="M0.500 3.500H5.600V8.200H10.700V13.400H0.500ZM0.500 8.200H5.600V13.400"/><rect x="8.300" y="0.600" width="5" height="5" rx=".6"/></svg><span class="abs" style="left:32px;top:2px;font-size:12.6px;letter-spacing:-0.36px">Extension: Redis</span></div>
    <div class="tab active" style="left:150px;width:120px"><svg class="abs" style="left:10px;top:10px" width="16" height="14" viewBox="0 0 16 14"><path fill="#c92c25" d="M0 3.100L8 0l8 3.100v7.700L8 14.100 0 10.800z"/><path fill="#dc382c" d="M0 3.100L8 0l8 3.100-8 3.300z"/><path fill="none" stroke="#a8201a" stroke-width=".8" d="M0 5.900l8 3.300 8-3.300M0 8.500l8 3.300 8-3.300"/><path fill="none" stroke="#b5241d" stroke-width=".5" d="M0 3.300l8 3.300 8-3.300"/><path fill="#fff" d="M6.900 1.100l1.500-.4.900 1.300-1.700.2z" opacity=".85"/><ellipse cx="4.800" cy="3.200" rx="1.900" ry=".7" fill="#fff"/><path fill="#fff" opacity=".8" d="M7.200 3.700l2.200-.2-.1 1.800-1.200.1z"/><path fill="#8d160f" d="M11.200 2.700l2.300.8-1.800.4z"/></svg><span class="abs" style="left:32px;top:2px;font-size:12.6px;letter-spacing:-0.4px">Redis</span><svg class="abs" style="left:96.700px;top:9px" width="16" height="16" viewBox="0 0 16 16"><path fill="none" stroke="#ffffff" stroke-width="1.3" d="M3.600 3.600l8.800 8.800M12.400 3.600l-8.800 8.800"/></svg></div>
    <svg class="abs" style="left:825px;top:10px" width="16" height="16" viewBox="0 0 16 16" fill="none"><path d="M12.700 3.300L4.300 11.700" stroke="#cccccc" stroke-width="4.100" stroke-linecap="round"/><path d="M12.700 3.300L4.500 11.500" stroke="#181818" stroke-width="1.900" stroke-linecap="round"/><path d="M2.900 10.500L5.500 13.100 1.500 14.500z" fill="#181818" stroke="#cccccc" stroke-width="1" stroke-linejoin="round"/></svg>
    <svg class="abs" style="left:851px;top:10px" width="16" height="16" viewBox="0 0 16 16" fill="none" stroke="#cccccc" stroke-width="1.1"><rect x="2.750" y="1.650" width="11.950" height="11.700" rx="1"/><path d="M8.700 1.650v11.700"/></svg>
    <svg class="abs" style="left:877px;top:10px" width="16" height="16" viewBox="0 0 16 16" fill="#cccccc"><circle cx="3" cy="8.200" r="1.050"/><circle cx="8" cy="8.200" r="1.050"/><circle cx="13" cy="8.200" r="1.050"/></svg>
  </div>
  <div id="ed">
    <div class="lbl" style="left:20px;top:6px;line-height:21px">HASH:</div>
    <div class="inp" style="left:61px;top:5px;width:592px;height:21px"><span class="abs" style="left:3px;top:1px;line-height:21px;color:#c2c2c2">Hash</span></div>
    <div class="btn" style="left:657px;top:5px;width:54px;height:21px;line-height:21px">Rename</div>
    <div class="btn" style="left:715px;top:5px;width:55px;height:21px;line-height:21px">TTL:-1</div>
    <div class="btn" style="left:774px;top:5px;width:54px;height:21px;line-height:21px">Reload</div>
    <div class="btn" style="left:832px;top:5px;width:54px;height:21px;line-height:21px">Delete</div>
    <div class="btn" style="left:786px;top:41px;width:100px;height:21px;line-height:21px">Delete Field</div>
    <!-- table -->
    <div class="abs" style="left:20px;top:36px;width:764px;height:44px;border:2px solid #2a90e6"></div>
    <div class="abs" style="left:22px;top:57px;width:760px;height:2px;background:#2a90e6"></div>
    <div class="abs" style="left:101px;top:38px;width:1px;height:40px;background:#2a90e6"></div>
    <div class="abs" style="left:441px;top:38px;width:1px;height:19px;background:#2a90e6"></div>
    <div class="abs" style="left:433px;top:59px;width:1px;height:19px;background:#2a90e6"></div>
    <div class="abs" style="left:765px;top:59px;width:1px;height:19px;background:#2a90e6"></div>
    <div class="abs" style="left:766px;top:58px;width:17px;height:21px;background:#222222"></div>
    <svg class="abs" style="left:766px;top:58px" width="17" height="21" viewBox="0 0 17 21"><path fill="#555555" d="M8.500 3.800l3.700 4.300H4.800zM8.500 18.200l3.700-4.300H4.800z"/></svg>
    <div class="abs" style="left:102px;top:38px;width:1px;height:40px;background:#2a90e6;opacity:.35"></div>
    <div class="abs" style="left:442px;top:38px;width:1px;height:19px;background:#2a90e6;opacity:.35"></div>
    <div class="abs" style="left:434px;top:59px;width:1px;height:19px;background:#2a90e6;opacity:.35"></div>
    <div class="lbl" style="left:22px;top:38px;width:79px;height:19px;line-height:21px;text-align:center">Index</div>
    <div class="lbl" style="left:102px;top:38px;width:339px;height:19px;line-height:21px;text-align:center">Field</div>
    <div class="lbl" style="left:442px;top:38px;width:340px;height:19px;line-height:21px;text-align:center">Value</div>
    <div class="cell" style="left:22px;top:59px;width:79px">0</div>
    <div class="cell" style="left:102px;top:59px;width:331px">1</div>
    <div class="cell" style="left:434px;top:59px;width:331px">1</div>
    <div class="lbl" style="left:20px;top:84px;line-height:21px">Field</div>
    <div class="inp" style="left:22px;top:107px;width:864px;height:42px"></div>
    <div class="lbl" style="left:20px;top:153px;line-height:21px">Value</div>
    <div class="inp" style="left:22px;top:176px;width:864px;height:483px"></div>
  </div>
  <div id="status">
    <div id="remote"></div>
    <svg class="abs" style="left:9px;top:2px;z-index:2" width="16" height="16" viewBox="0 0 16 16" fill="none" stroke="#ffffff" stroke-width="1.1"><path d="M2.800 5.700L7.200 9.700 2.800 13.700M11.800 2.200L7.800 6 11.800 9.800"/></svg>
    <svg class="abs" style="left:41px;top:3px" width="14" height="14" viewBox="0 0 14 14" fill="none" stroke="#cccccc" stroke-width="1.050"><circle cx="7" cy="7" r="5.750"/><path d="M4 4l6 6M10 4l-6 6"/></svg>
    <span style="left:58px">0</span>
    <svg class="abs" style="left:68px;top:3px" width="14" height="14" viewBox="0 0 14 14" fill="none" stroke="#cccccc" stroke-width="1.050" stroke-linejoin="round"><path d="M7 1.300l5.700 10.300H1.300z"/><path d="M7 5v3.400M7 9.300v1.200"/></svg>
    <span style="left:85px">0</span>
    <svg class="abs" style="left:108px;top:3px" width="14" height="14" viewBox="0 0 14 14" fill="none" stroke="#cccccc" stroke-width="1.050"><path d="M4.300 13.200l2.700-7.700 2.700 7.700M5.300 10.600h3.400"/><circle cx="7" cy="4.800" r="0.900"/><path d="M4.900 6.900a3 3 0 0 1 0-4.200M9.100 6.900a3 3 0 0 0 0-4.200M3.250 8.550a5.300 5.300 0 0 1 0-7.500M10.750 8.550a5.300 5.300 0 0 0 0-7.500"/></svg>
    <span style="left:125px">0</span>
    <span style="left:147px">Cangjie</span>
    <svg class="abs" style="left:1338.200px;top:2.400px" width="14" height="15" viewBox="0 0 14 15"><path fill="none" stroke="#cccccc" stroke-width="1.100" stroke-linejoin="round" d="M8 1.600C4.600 1.600 2.600 3.600 2.600 6.500V10.500L1.500 11.600H12L10.800 10.500V7.400"/><path fill="#cccccc" d="M5 12.200h3.600a1.800 1.500 0 0 1-3.600 0z"/><circle cx="10.200" cy="4" r="2.600" fill="#cccccc"/></svg>
  </div>
</div>
</body>
</html>
